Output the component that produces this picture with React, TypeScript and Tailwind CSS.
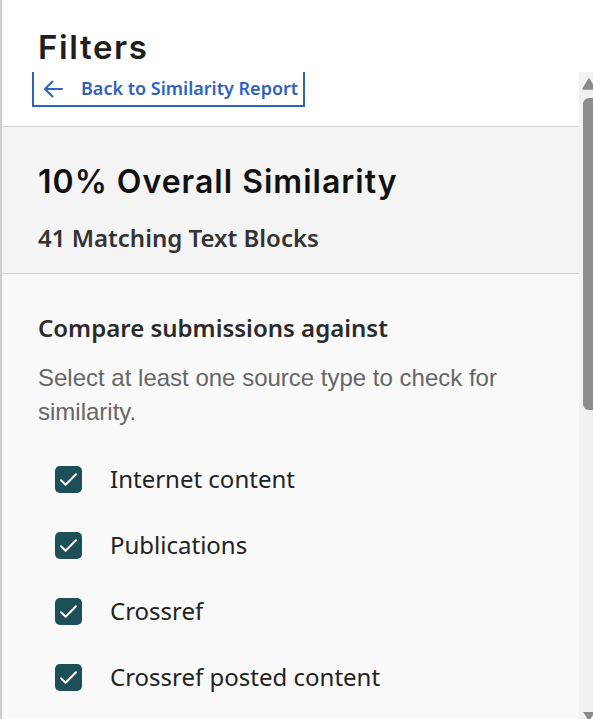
const sources = [
  "Internet content",
  "Publications",
  "Crossref",
  "Crossref posted content",
];

function CheckIcon() {
  return (
    <svg width="27" height="27" viewBox="0 0 27 27" fill="none">
      <path
        d="M6 14.2 L10.6 18.8 L21 8.3"
        stroke="white"
        strokeWidth="2"
        strokeLinecap="round"
        strokeLinejoin="round"
      />
    </svg>
  );
}

function BackArrow() {
  return (
    <svg width="20" height="18" viewBox="0 0 20 18" fill="none" className="shrink-0">
      <path
        d="M19 9 H2 M9.5 1.5 L2 9 L9.5 16.5"
        stroke="currentColor"
        strokeWidth="2"
        strokeLinecap="round"
        strokeLinejoin="round"
      />
    </svg>
  );
}

export default function App() {
  return (
    <div className="flex h-[719px] w-[593px] flex-col overflow-hidden border-l-2 border-[#cdcdcd] bg-white">

      {/* Header */}

      <div className="h-[72px] shrink-0 bg-white pl-9 pt-[27px]">
        <h1 className="font-['Inter',sans-serif] text-[33px] font-semibold leading-[40px] tracking-[1.6px] text-[#1e1e1e]">
          Filters
        </h1>
      </div>

      <div className="flex min-h-0 flex-1">

        <div className="flex min-w-0 flex-1 flex-col overflow-hidden">

          {/* Back link */}

          <div className="h-[55px] shrink-0 border-b border-[#d4d4d4] bg-white pl-[30px]">
            <button className="flex h-[35px] items-center gap-[18px] border-x-2 border-b-2 border-[#2e62bf] pl-[9px] pr-[5px] font-['Noto_Sans',sans-serif] text-[18px] font-semibold text-[#2e62bf]">
              <BackArrow />
              Back to Similarity Report
            </button>
          </div>

          {/* Overall */}

          <div className="shrink-0 border-b border-[#d4d4d4] bg-[#f4f4f4] pb-[20px] pl-9 pt-[36px]">
            <h2 className="font-['Inter',sans-serif] text-[32px] font-semibold leading-[38px] tracking-[1px] text-[#111]">
              10% Overall Similarity
            </h2>
            <p className="mt-[22px] font-['Noto_Sans',sans-serif] text-[24px] font-semibold leading-[30px] text-[#333]">
              41 Matching Text Blocks
            </p>
          </div>

          {/* Sources */}

          <div className="flex-1 bg-[#f9f9f9] pl-9 pr-6 pt-[39px]">
            <h3 className="font-['Noto_Sans',sans-serif] text-[24px] font-semibold leading-[30px] text-[#2b2b2b]">
              Compare submissions against
            </h3>
            <p className="mt-[18px] font-['Liberation_Sans',sans-serif] text-[24px] leading-[34px] text-[#666]">
              Select at least one source type to check for similarity.
            </p>

            <div className="mt-[17px] flex flex-col pl-[17px]">
              {sources.map((s) => (
                <label key={s} className="flex h-[66px] items-center gap-[28px]">
                  <span className="flex h-[27px] w-[27px] items-center justify-center rounded-[5px] bg-[#1d4f59]">
                    <CheckIcon />
                  </span>
                  <span className="font-['Noto_Sans',sans-serif] text-[24px] text-[#222]">
                    {s}
                  </span>
                </label>
              ))}
            </div>
          </div>

        </div>

        {/* Scrollbar */}

        <div className="flex w-[14px] shrink-0 flex-col bg-[#f1f1f1]">
          <svg width="14" height="20" viewBox="0 0 14 20" className="shrink-0">
            <path d="M4 17 L10 7 L16 17 Z" fill="#8a8a8a" stroke="#8a8a8a" strokeWidth="1.5" strokeLinejoin="round" />
          </svg>
          <div className="ml-[4px] mt-[6px] h-[312px] rounded-l-[6px] bg-[#8c8c8c]" />
          <div className="flex-1" />
          <svg width="14" height="8" viewBox="0 0 14 8" className="shrink-0">
            <path d="M4 1 L16 1 L10 10 Z" fill="#8a8a8a" />
          </svg>
        </div>

      </div>

    </div>
  );
}
